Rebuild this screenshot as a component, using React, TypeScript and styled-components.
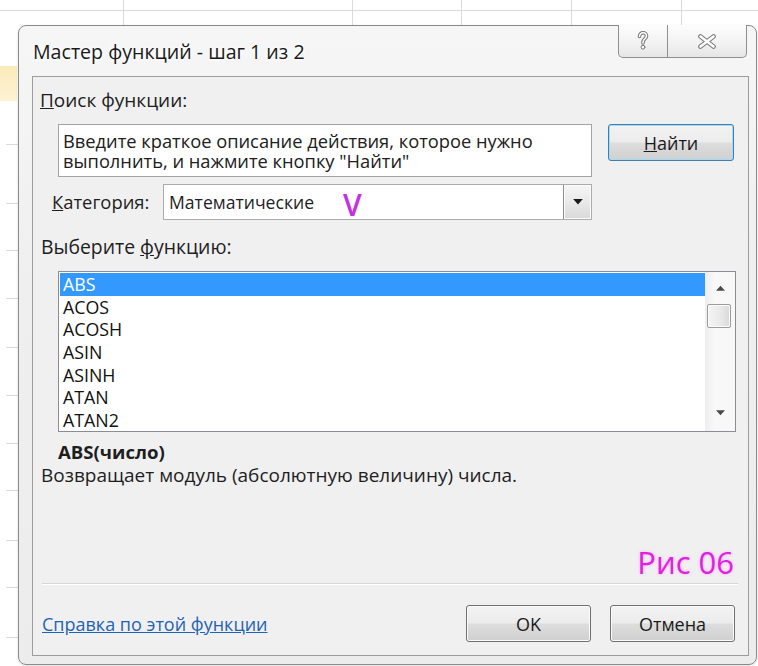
import React from "react";
import styled, { createGlobalStyle } from "styled-components";

const FONT = `"Open Sans", "Noto Sans", "DejaVu Sans", sans-serif`;
const GRID = "#d9dadb";

const GlobalStyle = createGlobalStyle`
  html, body { margin: 0; padding: 0; background: #ffffff; }
  body { font-family: ${FONT}; color: #1e1e1e; }
  * { box-sizing: border-box; }
`;

/* spreadsheet behind the dialog: column lines, row ticks, highlighted row header */
const colLines = [123, 352, 461, 571, 681];
const rowTicks = [144, 203, 250, 298, 347, 395, 443, 490, 540, 587, 637];
const sheetLayers = [
  `linear-gradient(#fbeabb, #fdf2d4) 0 66px / 17px 35px no-repeat`,
  `linear-gradient(${GRID}, ${GRID}) 0 10px / 100% 1px no-repeat`,
  ...colLines.map((x) => `linear-gradient(${GRID}, ${GRID}) ${x}px 0 / 1px 30px no-repeat`),
  ...rowTicks.map((y) => `linear-gradient(${GRID}, ${GRID}) 6px ${y}px / 14px 1px no-repeat`),
].join(", ");

const Sheet = styled.div`
  width: 758px;
  height: 666px;
  padding: 25px 1px 1px 18px;
  background: ${sheetLayers}, #ffffff;
  overflow: hidden;
`;

const Window = styled.div`
  width: 739px;
  height: 640px;
  border: 1px solid #8a8a8a;
  border-radius: 8px;
  background: linear-gradient(180deg, #f6f6f6 0%, #efefef 40%, #ececec 100%);
  display: flex;
  flex-direction: column;
  box-shadow: 0 1px 3px rgba(0, 0, 0, 0.12);
`;

const TitleBar = styled.div`
  height: 50px;
  display: flex;
  align-items: flex-start;
  flex: none;
`;

const Title = styled.div`
  margin: 13px 0 0 14px;
  font-size: 19.6px;
  line-height: 26px;
  color: #1a1a1a;
  white-space: nowrap;
  text-shadow: 0 0 8px #ffffff, 0 0 4px #ffffff;
`;

const CaptionGroup = styled.div`
  margin: -1px 9px 0 auto;
  display: flex;
  height: 33px;
`;

const CaptionButton = styled.div<{ $w: number; $side: "left" | "right" }>`
  width: ${(p) => p.$w}px;
  height: 100%;
  border: 1px solid #8f8f8f;
  border-top: none;
  ${(p) => (p.$side === "right" ? "border-left: none;" : "")}
  border-radius: ${(p) => (p.$side === "left" ? "0 0 0 5px" : "0 0 5px 0")};
  background: linear-gradient(180deg, #fdfdfd 0%, #f1f1f1 60%, #e6e6e6 100%);
  display: flex;
  align-items: center;
  justify-content: center;
`;

const Client = styled.div`
  flex: 1;
  margin: 0 7px 8px 13px;
  border: 1px solid #9c9c9c;
  background: #f0f0f0;
  position: relative;
  display: flex;
  flex-direction: column;
  font-size: 18px;
`;

const GroupLabel = styled.div<{ $top: number; $left: number; $size: number }>`
  margin: ${(p) => p.$top}px 0 0 ${(p) => p.$left}px;
  font-size: ${(p) => p.$size}px;
  line-height: 20px;
  white-space: nowrap;
`;

const SearchRow = styled.div`
  margin-top: 14px;
  padding-left: 25px;
  display: flex;
  align-items: flex-start;
  gap: 16px;
`;

const DescBox = styled.div`
  width: 534px;
  height: 53px;
  border: 1px solid #a3a3a3;
  background: #ffffff;
  padding: 6px 0 0 4px;
  font-size: 18.3px;
  line-height: 20px;
  color: #202020;
  white-space: nowrap;
`;

const PushButton = styled.div<{ $w: number; $default?: boolean }>`
  width: ${(p) => p.$w}px;
  height: 37px;
  border: 1px solid ${(p) => (p.$default ? "#3d7db0" : "#707070")};
  border-radius: 3px;
  background: linear-gradient(180deg, #f3f3f3 0%, #ececec 48%, #dddddd 52%, #d0d0d0 100%);
  box-shadow: inset 0 0 0 1px ${(p) => (p.$default ? "#a6dbf7" : "#fbfbfb")};
  display: flex;
  align-items: center;
  justify-content: center;
  color: #1a1a1a;
  font-size: 18px;
  line-height: 20px;
`;

const CategoryRow = styled.div`
  margin-top: 7px;
  padding-left: 19px;
  display: flex;
  align-items: center;
`;

const CategoryLabel = styled.div`
  width: 111px;
  flex: none;
  font-size: 18.4px;
  line-height: 20px;
  white-space: nowrap;
`;

const Select = styled.div`
  width: 429px;
  height: 36px;
  border: 1px solid #ababab;
  background: #ffffff;
  display: flex;
  align-items: center;
  position: relative;
`;

const SelectValue = styled.div`
  flex: 1;
  padding-left: 5px;
  font-size: 17.6px;
  line-height: 20px;
`;

const DropButton = styled.div`
  width: 28px;
  height: 100%;
  border-left: 1px solid #8c8c8c;
  background: linear-gradient(180deg, #f6f6f6 0%, #e9e9e9 50%, #d9d9d9 100%);
  box-shadow: inset 0 0 0 1px #fcfcfc;
  display: flex;
  align-items: center;
  justify-content: center;
`;

const Mark = styled.div`
  position: absolute;
  left: 179px;
  top: 0px;
  font-size: 30px;
  line-height: 40px;
  font-weight: 600;
  color: #c530e3;
`;

const ListBox = styled.div`
  margin: 14px 0 0 25px;
  width: 678px;
  height: 161px;
  border: 1px solid #8a8d94;
  background: #ffffff;
  display: flex;
`;

const Items = styled.div`
  flex: 1;
  padding: 1px 0 0 1px;
  font-size: 17.8px;
`;

const Item = styled.div<{ $selected?: boolean }>`
  height: 22.67px;
  line-height: 22.67px;
  padding-left: 3px;
  background: ${(p) => (p.$selected ? "#3399ff" : "transparent")};
  color: ${(p) => (p.$selected ? "#ffffff" : "#111111")};
`;

const ScrollBar = styled.div`
  width: 30px;
  background: linear-gradient(90deg, #eeeeee 0%, #f8f8f8 30%, #f8f8f8 100%);
  display: flex;
  flex-direction: column;
`;

const ScrollArrow = styled.div<{ $h: number }>`
  height: ${(p) => p.$h}px;
  display: flex;
  align-items: center;
  justify-content: center;
`;

const Thumb = styled.div`
  margin-left: 2px;
  width: 24px;
  height: 24px;
  border: 1px solid #9b9b9b;
  border-radius: 2px;
  background: linear-gradient(90deg, #f4f4f4 0%, #e8e8e8 60%, #d8d8d8 100%);
  box-shadow: inset 0 0 0 1px #fbfbfb;
`;

const Track = styled.div`
  flex: 1;
`;

const Signature = styled.div`
  margin: 10px 0 0 25px;
  font-size: 18.6px;
  line-height: 20px;
  font-weight: 700;
  white-space: nowrap;
`;

const Summary = styled.div`
  margin: 3px 0 0 8px;
  font-size: 19px;
  line-height: 20px;
  white-space: nowrap;
`;

const Spacer = styled.div`
  flex: 1;
`;

const Figure = styled.div`
  position: absolute;
  right: 14px;
  top: 465px;
  font-size: 31px;
  line-height: 40px;
  color: #df22df;
  text-shadow: 0 0 3px rgba(255, 140, 255, 0.7);
`;

const Separator = styled.div`
  margin: 0 10px 0 9px;
  height: 2px;
  border-top: 1px solid #d6d6d6;
  border-bottom: 1px solid #ffffff;
`;

const Footer = styled.div`
  margin: 20px 0 13px 0;
  padding: 0 13px 0 9px;
  height: 37px;
  display: flex;
  align-items: center;
  gap: 19px;
`;

const HelpLink = styled.a`
  flex: 1;
  color: #1f64b4;
  text-decoration: underline;
  font-size: 18px;
  line-height: 20px;
  white-space: nowrap;
  cursor: pointer;
`;

const HelpGlyph = () => (
  <svg width="12" height="20" viewBox="0 0 12 20">
    <g fill="none" strokeLinecap="round" strokeLinejoin="round">
      <path d="M2.5 5.5C2.5 3 4.2 1.8 6 1.8C8 1.8 9.5 3.1 9.5 5C9.5 7.6 6 8 6 11.2V12" stroke="#777" strokeWidth="3.6" />
      <path d="M2.5 5.5C2.5 3 4.2 1.8 6 1.8C8 1.8 9.5 3.1 9.5 5C9.5 7.6 6 8 6 11.2V12" stroke="#fff" strokeWidth="1.6" />
      <circle cx="6" cy="16.2" r="1.9" fill="#fff" stroke="#777" strokeWidth="1" />
    </g>
  </svg>
);

const CloseGlyph = () => (
  <svg width="22" height="15" viewBox="0 0 22 15">
    <g fill="none" strokeLinecap="round">
      <path d="M4.5 2.5L17.5 12.5M17.5 2.5L4.5 12.5" stroke="#777" strokeWidth="4.6" />
      <path d="M4.5 2.5L17.5 12.5M17.5 2.5L4.5 12.5" stroke="#fff" strokeWidth="2.6" />
    </g>
  </svg>
);

const Triangle = ({ up, color = "#1a1a1a", w = 9 }: { up?: boolean; color?: string; w?: number }) => (
  <svg width={w} height={Math.round(w / 2) + 1} viewBox="0 0 8 5">
    <path d={up ? "M0 5L4 0.5L8 5Z" : "M0 0L8 0L4 4.5Z"} fill={color} />
  </svg>
);

const functions = ["ABS", "ACOS", "ACOSH", "ASIN", "ASINH", "ATAN", "ATAN2"];

export default function App() {
  return (
    <>
      <GlobalStyle />
      <Sheet>
        <Window>
          <TitleBar>
            <Title>Мастер функций - шаг 1 из 2</Title>
            <CaptionGroup>
              <CaptionButton $w={50} $side="left">
                <HelpGlyph />
              </CaptionButton>
              <CaptionButton $w={79} $side="right">
                <CloseGlyph />
              </CaptionButton>
            </CaptionGroup>
          </TitleBar>

          <Client>
            <GroupLabel $top={13} $left={7} $size={19}>
              <u>П</u>оиск функции:
            </GroupLabel>

            <SearchRow>
              <DescBox>
                Введите краткое описание действия, которое нужно
                <br />
                выполнить, и нажмите кнопку "Найти"
              </DescBox>
              <PushButton $w={126} $default>
                <span>
                  <u>Н</u>айти
                </span>
              </PushButton>
            </SearchRow>

            <CategoryRow>
              <CategoryLabel>
                <u>К</u>атегория:
              </CategoryLabel>
              <Select>
                <SelectValue>Математические</SelectValue>
                <DropButton>
                  <Triangle w={10} />
                </DropButton>
                <Mark>V</Mark>
              </Select>
            </CategoryRow>

            <GroupLabel $top={17} $left={8} $size={19.4}>
              Выберите <u>ф</u>ункцию:
            </GroupLabel>

            <ListBox>
              <Items>
                {functions.map((f, i) => (
                  <Item key={f} $selected={i === 0}>
                    {f}
                  </Item>
                ))}
              </Items>
              <ScrollBar>
                <ScrollArrow $h={32}>
                  <Triangle up color="#4a4a4a" w={9} />
                </ScrollArrow>
                <Thumb />
                <Track />
                <ScrollArrow $h={36}>
                  <Triangle color="#4a4a4a" w={9} />
                </ScrollArrow>
              </ScrollBar>
            </ListBox>

            <Signature>ABS(число)</Signature>
            <Summary>Возвращает модуль (абсолютную величину) числа.</Summary>

            <Spacer />
            <Figure>Рис 06</Figure>
            <Separator />

            <Footer>
              <HelpLink>Справка по этой функции</HelpLink>
              <PushButton $w={125}>OK</PushButton>
              <PushButton $w={125}>Отмена</PushButton>
            </Footer>
          </Client>
        </Window>
      </Sheet>
    </>
  );
}
